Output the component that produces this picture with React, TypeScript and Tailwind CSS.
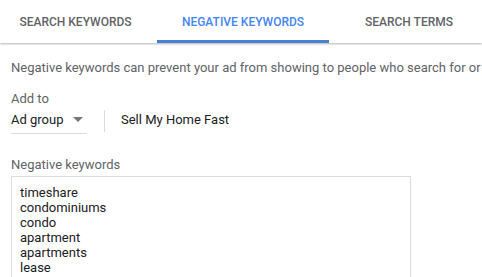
import React from 'react';

const keywords = ['timeshare', 'condominiums', 'condo', 'apartment', 'apartments', 'lease'];

export default function App() {
  return (
    <div className="w-[482px] h-[277px] overflow-hidden bg-white font-['Roboto',sans-serif]">
      {/* tabs */}
      <div className="relative flex h-[43px] shadow-[0_1px_2px_rgba(0,0,0,0.3)]">
        <div className="w-[157px] shrink-0 flex items-center justify-center text-[12px] font-medium text-[#5f6368]">
          <span className="ml-[-6px]">SEARCH KEYWORDS</span>
        </div>
        <div className="relative w-[172px] shrink-0 flex items-center justify-center text-[12px] font-medium text-[#4285f4]">
          NEGATIVE KEYWORDS
          <div className="absolute left-0 right-0 bottom-0 h-[3px] bg-[#4a7fd0]" />
        </div>
        <div className="w-[160px] shrink-0 flex items-center justify-center text-[12px] font-medium text-[#5f6368]">
          SEARCH TERMS
        </div>
      </div>

      <div className="pl-[11px] pt-[17px]">
        <p className="text-[13px] leading-[16px] text-[#5f6368] whitespace-nowrap">
          Negative keywords can prevent your ad from showing to people who search for or
        </p>

        <div className="mt-[15px] text-[13px] leading-[16px] text-[#5f6368]">Add to</div>
        <div className="flex items-center mt-[3px]">
          <div className="flex items-center w-[76px] h-[24px] border-b border-[#dadce0] text-[13px] text-[#202124]">
            <span className="pb-[4px]">Ad group</span>
            <svg width="10" height="5" viewBox="0 0 10 5" className="ml-[9px] mb-[4px]">
              <path d="M0 0 L10 0 L5 5 Z" fill="#757575" />
            </svg>
          </div>
          <div className="w-px h-[22px] bg-[#dadce0] ml-[17px] mr-[16px] self-start" />
          <div className="text-[13px] text-[#202124] pb-[4px]">Sell My Home Fast</div>
        </div>

        <div className="mt-[23px] text-[13px] leading-[16px] text-[#5f6368]">Negative keywords</div>
        <div className="mt-[3px] w-[400px] h-[120px] border border-[#dadce0] pl-[8px] pt-[8px]">
          {keywords.map((k) => (
            <div key={k} className="text-[13px] leading-[15px] text-[#202124]">
              {k}
            </div>
          ))}
        </div>
      </div>
    </div>
  );
}
